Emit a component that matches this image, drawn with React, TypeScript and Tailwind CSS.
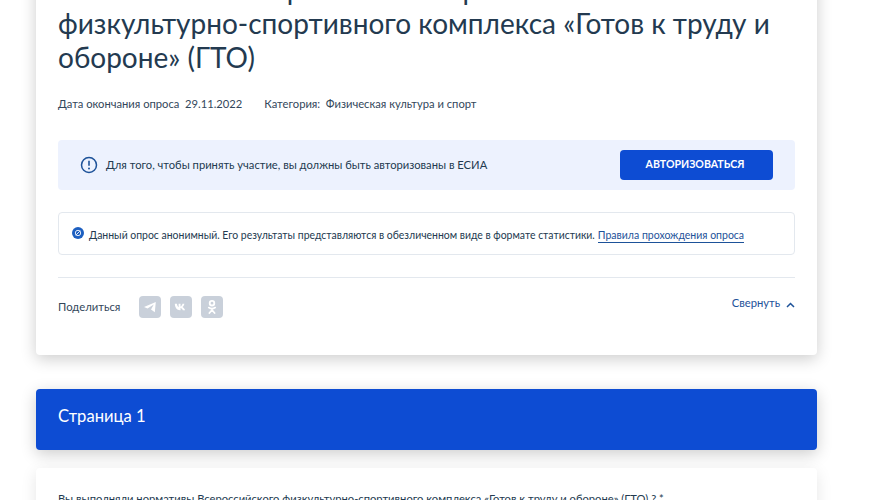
const font = { fontFamily: 'Lato, "Noto Sans", sans-serif' }

function TelegramIcon() {
  return (
    <svg width="14" height="14" viewBox="0 0 14 14">
      <path d="M1 7 12.800 2 11.800 12.200 8 9.400 10.800 4.600 4.500 8.600Z" fill="#fff" />
    </svg>
  )
}

function VkIcon() {
  return (
    <svg width="14" height="14" viewBox="0 0 14 14">
      <path
        d="M.8 3.800h2.100c.3 1.700 1 3 1.700 3.400V3.800h1.900v2.800c.8-.2 1.700-1.400 2-2.800h1.900c-.3 1.500-1.100 2.800-1.900 3.300.9.500 2 1.500 2.600 3.100H8.800C8.300 8.900 7.500 8.200 6.500 8v2.200H6C3 10.200 1 7.800.8 3.800Z"
        fill="#fff"
      />
    </svg>
  )
}

function OkIcon() {
  return (
    <svg width="14" height="16" viewBox="0 0 14 16" fill="none" stroke="#fff" strokeWidth="1.800" strokeLinecap="round">
      <circle cx="7" cy="4.200" r="2.300" />
      <path d="M3.800 8.600c2 1.300 4.400 1.300 6.400 0M7 9.800v1.200M7 11 4.400 14M7 11l2.600 3" />
    </svg>
  )
}

function ShareButton({ children }: { children: React.ReactNode }) {
  return <div className="w-[22px] h-[22px] rounded bg-[#c9d0da] flex items-center justify-center">{children}</div>
}

export default function App() {
  return (
    <div className="h-[500px] overflow-hidden bg-white text-[#0b1f33]" style={font}>
      <div className="w-[781px] ml-9 mt-[-28px]">
        <div className="bg-white rounded-b shadow-[0_4px_16px_rgba(0,0,0,0.2)] px-[22px] pb-[37px]">
          <h1 className="text-[28px] leading-[34px] text-[#233a50] h-[102px]">
            О выполнении нормативов Всероссийского
            <br />
            физкультурно-спортивного комплекса «Готов к труду и
            <br />
            обороне» (ГТО)
          </h1>
          <div className="mt-[22px] flex text-[11.2px] leading-4 text-[#33475b]">
            <span className="whitespace-pre">Дата окончания опроса  29.11.2022</span>
            <span className="ml-[22px] whitespace-pre">Категория:  Физическая культура и спорт</span>
          </div>

          <div className="mt-[28px] h-[50px] bg-[#edf2fe] rounded flex items-center pl-[22px] pr-[22px]">
            <svg width="18" height="18" viewBox="0 0 18 18" fill="none" className="shrink-0">
              <circle cx="9" cy="9" r="7.500" stroke="#1d5299" strokeWidth="1.500" />
              <path d="M9 4.800v5" stroke="#1d5299" strokeWidth="1.600" />
              <circle cx="9" cy="12.500" r="1" fill="#1d5299" />
            </svg>
            <span className="ml-[8px] text-[11.2px] text-[#233a50]">
              Для того, чтобы принять участие, вы должны быть авторизованы в ЕСИА
            </span>
            <button className="ml-auto w-[153px] h-[30px] pr-[3px] rounded bg-[#0d4cd3] text-white text-[10.6px] font-bold">
              АВТОРИЗОВАТЬСЯ
            </button>
          </div>

          <div className="mt-[22px] h-[43px] border border-[#e3e8ee] rounded flex items-center pl-[13px]">
            <svg width="12" height="12" viewBox="0 0 12 12" className="shrink-0 mt-[-2px]">
              <circle cx="6" cy="6" r="6" fill="#1d5fc0" />
              <circle cx="6" cy="6" r="2.700" fill="none" stroke="#dfe8f8" strokeWidth="1" />
              <path d="M3.700 8.300 8.300 3.700" stroke="#dfe8f8" strokeWidth="1" />
            </svg>
            <span className="ml-[5px] text-[10.45px] text-[#233a50] whitespace-nowrap mt-[4px]">
              Данный опрос анонимный. Его результаты представляются в обезличенном виде в формате статистики.
            </span>
            <a className="ml-[3px] text-[10.5px] leading-[13px] text-[#1d5299] border-b border-[#1d5299] whitespace-nowrap mt-[4px]">
              Правила прохождения опроса
            </a>
          </div>

          <div className="mt-[22px] border-t border-[#e3e8ee] pt-[18px] flex items-start">
            <span className="mt-[3px] text-[11.3px] text-[#33475b] w-[81px]">Поделиться</span>
            <div className="flex gap-[9px]">
              <ShareButton>
                <TelegramIcon />
              </ShareButton>
              <ShareButton>
                <VkIcon />
              </ShareButton>
              <ShareButton>
                <OkIcon />
              </ShareButton>
            </div>
            <div className="ml-auto flex items-center gap-[6px] text-[11.2px] text-[#1d5299] leading-4 mt-[-1px]">
              Свернуть
              <svg width="9" height="6" viewBox="0 0 9 6" fill="none" className="mt-[3px]">
                <path d="M1 5 4.500 1.500 8 5" stroke="#1d5299" strokeWidth="1.500" />
              </svg>
            </div>
          </div>
        </div>

        <div className="mt-[34px] h-[61px] rounded bg-[#0d4cd3] shadow-[0_4px_16px_rgba(0,0,0,0.2)] flex items-center px-[22px] pb-[6px] text-white text-[16.6px]">
          Страница 1
        </div>

        <div className="mt-[18px] bg-white rounded shadow-[0_4px_16px_rgba(0,0,0,0.1)] px-[22px] pt-[23px] h-[200px] text-[11.2px] text-[#233a50]">
          Вы выполняли нормативы Всероссийского физкультурно-спортивного комплекса «Готов к труду и обороне» (ГТО) ? *
        </div>
      </div>
    </div>
  )
}
